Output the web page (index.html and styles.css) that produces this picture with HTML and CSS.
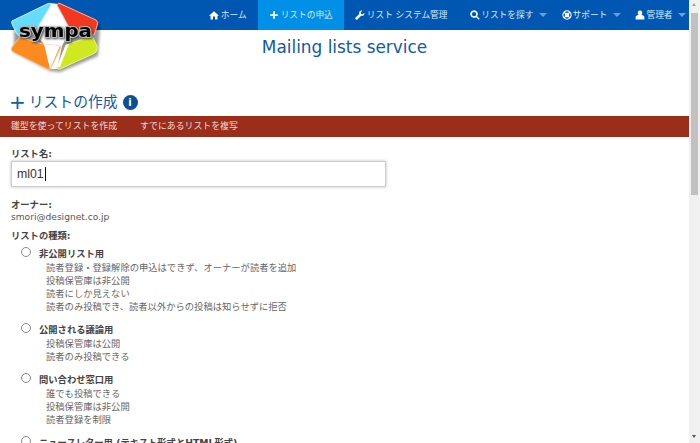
FILE: index.html
```html
<!DOCTYPE html>
<html lang="ja">
<head>
  <meta charset="UTF-8" />
  <title>Mailing lists service</title>
  <link rel="stylesheet" href="styles.css">
</head>

<body>
  <div class="page">
    <header class="topbar">
      <a class="menu-item"><svg class="icon" viewBox="0 0 16 16"><path d="M8 2 L16 9 H13.5 V15 H9.7 V10.5 H6.3 V15 H2.5 V9 H0 Z"/></svg>ホーム</a>
      <a class="menu-item active"><svg class="icon" viewBox="0 0 16 16"><path d="M6.6 2 H9.4 V6.6 H14 V9.4 H9.4 V14 H6.6 V9.4 H2 V6.6 H6.6 Z"/></svg>リストの申込</a>
      <a class="menu-item"><svg class="icon" viewBox="0 0 16 16"><path d="M15 4.2 L12.3 6.8 L9.8 6.2 L9.2 3.7 L11.8 1 C9.5 0.3 7 1.6 6.6 4 C6.5 4.8 6.6 5.6 6.8 6.2 L1 12 C0.2 12.8 0.2 14 1 14.9 C1.9 15.7 3.1 15.7 3.9 15 L9.8 9.1 C12.7 10 15.9 7.8 15 4.2 Z"/></svg>リスト システム管理</a>
      <a class="menu-item has-caret"><svg class="icon" viewBox="0 0 16 16"><path fill-rule="evenodd" d="M6.5 0.5 A6 6 0 0 1 11.3 10 L15.5 14 L14 15.5 L9.9 11.4 A6 6 0 1 1 6.5 0.5 Z M6.5 3 A3.5 3.5 0 1 0 6.5 10 A3.5 3.5 0 1 0 6.5 3 Z"/></svg>リストを探す</a>
      <a class="menu-item has-caret"><svg class="icon" viewBox="0 0 16 16"><path fill-rule="evenodd" d="M8 0.5 A7.5 7.5 0 1 1 8 15.5 A7.5 7.5 0 1 1 8 0.5 Z M4.6 3.2 L6.3 4.9 A3.6 3.6 0 0 1 9.7 4.9 L11.4 3.2 A6 6 0 0 0 4.6 3.2 Z M3.2 4.6 A6 6 0 0 0 3.2 11.4 L4.9 9.7 A3.6 3.6 0 0 1 4.9 6.3 Z M12.8 4.6 L11.1 6.3 A3.6 3.6 0 0 1 11.1 9.7 L12.8 11.4 A6 6 0 0 0 12.8 4.6 Z M6.3 11.1 L4.6 12.8 A6 6 0 0 0 11.4 12.8 L9.7 11.1 A3.6 3.6 0 0 1 6.3 11.1 Z"/></svg>サポート</a>
      <a class="menu-item has-caret"><svg class="icon" viewBox="0 0 16 16"><path d="M8 1 A3.6 3.6 0 0 1 10.4 7.4 C13 8.2 15 9.5 15 11 V15 H1 V11 C1 9.5 3 8.2 5.6 7.4 A3.6 3.6 0 0 1 8 1 Z"/></svg>管理者</a>
    </header>

    <svg class="logo" viewBox="0 0 110 80">
      <defs>
        <filter id="soft" x="-10%" y="-10%" width="130%" height="130%">
          <feGaussianBlur stdDeviation="1.5"/>
        </filter>
      </defs>
      <!-- shadow -->
      <path d="M54 6 L100 25 L98 56 L60 72 L50 71 L14 52 L14 24 Z" fill="#000" opacity=".4" filter="url(#soft)"/>
      <!-- white star under the petals -->
      <path d="M50 3 L58 4 L70 30 L62 46 L57 69 L50 69 L43 43 L32 29 Z" fill="#fff"/>
      <!-- cyan -->
      <path d="M12 21 L47 4 Q50 2 51 5 L38 27 L20 37 Q16 34 13 26 Q11 23 12 21 Z" fill="#66dcfb" stroke="#c4f3ff" stroke-width="1"/>
      <!-- red -->
      <path d="M57 5 Q58 2 61 4 L96 20 Q99 22 97 26 L94 35 L70 29 Z" fill="#f2391f" stroke="#ffb3a6" stroke-width="1"/>
      <!-- orange -->
      <path d="M20 37 L42 44 L60 46 Q61 47 60 49 L51 68 Q50 70 47 69 L13 52 Q10 50 12 47 Z" fill="#fb8a1f" stroke="#ffc48e" stroke-width="1"/>
      <path d="M44 44 L60 46 L50 69 Z" fill="#fff"/>
      <!-- lime -->
      <path d="M66 45 L92 36 L97 46 Q98 50 95 53 L60 69 Q57 70 57 67 Z" fill="#cfe81f" stroke="#e9f68a" stroke-width="1"/>
      <path d="M66 45 L69 44 L60 67 L57 67 Z" fill="#fff"/>
      <text class="logo-text" x="19" y="37" textLength="73" lengthAdjust="spacingAndGlyphs">sympa</text>
    </svg>

    <main class="content">
      <h1 class="site-title">Mailing lists service</h1>

      <h2 class="page-title"><span class="plus">+</span> リストの作成 <span class="info">i</span></h2>

      <nav class="subnav">
        <a>雛型を使ってリストを作成</a>
        <a>すでにあるリストを複写</a>
      </nav>

      <form class="list-form">
        <label class="field-label">リスト名:</label>
        <div class="text-input">ml01<span class="caret-bar"></span></div>

        <div class="owner">
          <div class="field-label">オーナー:</div>
          <div class="owner-mail">smori@designet.co.jp</div>
        </div>

        <div class="field-label types-label">リストの種類:</div>

        <div class="type">
          <span class="radio"></span>
          <div>
            <div class="type-name">非公開リスト用</div>
            <div class="type-desc">
              <div>読者登録・登録解除の申込はできず、オーナーが読者を追加</div>
              <div>投稿保管庫は非公開</div>
              <div>読者にしか見えない</div>
              <div>読者のみ投稿でき、読者以外からの投稿は知らせずに拒否</div>
            </div>
          </div>
        </div>

        <div class="type">
          <span class="radio"></span>
          <div>
            <div class="type-name">公開される議論用</div>
            <div class="type-desc">
              <div>投稿保管庫は公開</div>
              <div>読者のみ投稿できる</div>
            </div>
          </div>
        </div>

        <div class="type">
          <span class="radio"></span>
          <div>
            <div class="type-name">問い合わせ窓口用</div>
            <div class="type-desc">
              <div>誰でも投稿できる</div>
              <div>投稿保管庫は非公開</div>
              <div>読者登録を制限</div>
            </div>
          </div>
        </div>

        <div class="type">
          <span class="radio"></span>
          <div>
            <div class="type-name">ニュースレター用 (テキスト形式とHTML形式)</div>
          </div>
        </div>
      </form>
    </main>
  </div>

  <div class="scrollbar">
    <div class="arrow arrow-up"></div>
    <div class="thumb"></div>
    <div class="arrow arrow-down"></div>
  </div>
</body>
</html>
```

FILE: styles.css
```css
/* Base */
html,
body {
  height: 100%;
}

body {
  margin: 0;
  display: flex;
  overflow: hidden;
  background: #fff;
  color: #555;
  font-family: "DejaVu Sans", "Noto Sans CJK JP", sans-serif;
  font-size: 9.3px;
  line-height: 13px;
}

.page {
  flex: 1;
  min-width: 0;
  position: relative;
  overflow: hidden;
}

/* Top bar */
.topbar {
  height: 30px;
  background: #0057b1;
  display: flex;
  justify-content: flex-end;
}

.menu-item {
  display: flex;
  align-items: center;
  padding: 0 11px;
  color: #d9e8f6;
  font-size: 8.7px;
  white-space: nowrap;
}

.menu-item.active {
  background: #0090e8;
}

.menu-item.has-caret {
  padding: 0 3px 0 11.7px;
}

.menu-item.has-caret::after {
  content: "";
  margin-left: 5.5px;
  border-top: 4px solid #6f9fd2;
  border-left: 4px solid transparent;
  border-right: 4px solid transparent;
}

.icon {
  width: 10px;
  height: 10px;
  margin-right: 2px;
  fill: #fff;
}

.has-caret .icon {
  margin-right: 1px;
}

/* Logo */
.logo {
  position: absolute;
  top: 0;
  left: 0;
  width: 110px;
  height: 80px;
}

.logo-text {
  font-family: "DejaVu Sans", sans-serif;
  font-size: 17px;
  font-weight: bold;
  fill: #000;
  stroke: #bbb;
  stroke-width: 2px;
  paint-order: stroke;
  filter: drop-shadow(1px 1px 1px #444);
}

/* Headings */
.site-title {
  margin: 6px 0 0;
  text-align: center;
  color: #0f5ba5;
  font-size: 16.9px;
  font-weight: normal;
  line-height: 22px;
}

.page-title {
  margin: 34px 0 0 9px;
  display: flex;
  align-items: center;
  color: #0f5ba5;
  font-size: 14.8px;
  font-weight: normal;
  line-height: 20px;
}

.plus {
  font-size: 20px;
  margin-right: 3px;
}

.info {
  width: 15px;
  height: 15px;
  margin-left: 5px;
  border-radius: 50%;
  background: #0a4f98;
  color: #fff;
  font-size: 10px;
  font-weight: bold;
  line-height: 15px;
  text-align: center;
}

/* Sub navigation */
.subnav {
  height: 21px;
  margin-top: 4px;
  padding-left: 11px;
  display: flex;
  align-items: center;
  gap: 23px;
  background: #9b2d1b;
  color: #f0dcd8;
  font-size: 8.9px;
}

/* Form */
.list-form {
  padding: 10px 11px 0;
}

.field-label {
  font-weight: bold;
  color: #444;
}

.text-input {
  width: 368px;
  height: 24px;
  margin-top: 1px;
  padding-left: 5px;
  display: flex;
  align-items: center;
  border: 1px solid #ccc;
  box-shadow: 0 0 3px rgba(0, 0, 0, .25);
  color: #333;
  font-family: "Liberation Sans", sans-serif;
  font-size: 12.3px;
}

.caret-bar {
  width: 1px;
  height: 14px;
  margin-left: 1px;
  background: #111;
}

.owner {
  margin-top: 11px;
}

.owner-mail {
  font-size: 9.1px;
}

.types-label {
  margin-top: 5px;
}

.type {
  display: flex;
  gap: 8px;
  margin: 5px 0 10px 10px;
}

.radio {
  flex: none;
  width: 8px;
  height: 8px;
  border: 1px solid #8a8a8a;
  border-radius: 50%;
}

.type-name {
  font-weight: bold;
  color: #444;
}

.type-desc {
  margin: 1px 0 0 7px;
  color: #666;
}

/* Scrollbar */
.scrollbar {
  flex: none;
  width: 11px;
  display: flex;
  flex-direction: column;
  background: #f0f0f0;
}

.thumb {
  height: 182px;
  margin: 0 2px auto;
  background: #c1c1c1;
}

.arrow {
  height: 13px;
  position: relative;
}

.arrow::after {
  content: "";
  position: absolute;
  left: 3px;
  border-left: 2.5px solid transparent;
  border-right: 2.5px solid transparent;
}

.arrow-up::after {
  top: 3px;
  border-bottom: 3px solid #a3a3a3;
}

.arrow-down::after {
  top: 5px;
  border-top: 3px solid #505050;
}
```
